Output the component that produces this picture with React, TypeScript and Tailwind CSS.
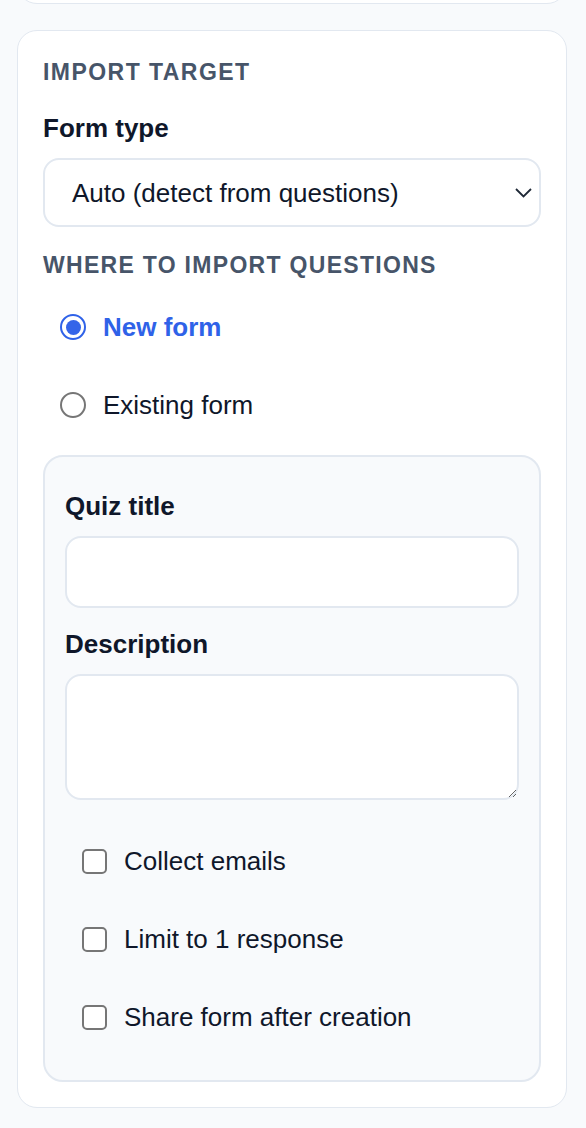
import { useState } from "react";

const font = { fontFamily: '"Liberation Sans", Arial, sans-serif' };

function Radio({ checked, label, onClick }: { checked: boolean; label: string; onClick: () => void }) {
    return (
        <div onClick={onClick} className="flex items-center h-[52px] pl-[17px] gap-[17px] cursor-pointer">
            {checked ? (
                <span className="w-[26px] h-[26px] rounded-full border-[2.5px] border-[#2f62e8] bg-white flex items-center justify-center">
                    <span className="w-[15px] h-[15px] rounded-full bg-[#3565e9]" />
                </span>
            ) : (
                <span className="w-[26px] h-[26px] rounded-full border-2 border-[#767676] bg-white" />
            )}
            <span className={checked ? "text-[26px] leading-[36px] font-bold text-[#2f62e8]" : "text-[26px] leading-[36px] text-[#0f172a]"}>
                {label}
            </span>
        </div>
    );
}

function Checkbox({ label }: { label: string }) {
    const [on, setOn] = useState(false);
    return (
        <div onClick={() => setOn(!on)} className="flex items-center h-[52px] pl-[17px] gap-[17px] cursor-pointer">
            <span className={on ? "w-[25px] h-[25px] rounded-[5px] border-2 border-[#2f62e8] bg-[#2f62e8]" : "w-[25px] h-[25px] rounded-[5px] border-2 border-[#767676] bg-white"} />
            <span className="text-[26px] leading-[36px] text-[#0f172a]">{label}</span>
        </div>
    );
}

export default function App() {
    const [target, setTarget] = useState("new");

    return (
        <div style={font} className="min-h-screen bg-[#f8fafc] pb-[20px] overflow-hidden">
            {/* bottom of the previous card */}
            <div className="ml-[17px] w-[550px] h-[44px] -mt-[40px] bg-white border border-[#e2e8f0] rounded-[20px]" />

            <div className="ml-[17px] mt-[26px] w-[550px] bg-white border border-[#e2e8f0] rounded-[20px] px-[25px] pt-[25px] pb-[25px] flex flex-col">
                <h2 className="text-[23px] leading-[32px] font-bold tracking-[1.45px] text-[#475569]">IMPORT TARGET</h2>

                <label className="mt-[22px] text-[26px] leading-[36px] font-bold text-[#0f172a]">Form type</label>
                <div className="mt-[12px] h-[69px] bg-white border-2 border-[#e2e8f0] rounded-[16px] pl-[27px] pr-[7px] flex items-center justify-between">
                    <span className="text-[26px] leading-[36px] text-[#0f172a]">Auto (detect from questions)</span>
                    <svg width="17" height="10" viewBox="0 0 17 10" fill="none">
                        <polyline points="1,1 8.5,8.5 16,1" stroke="#1f2937" strokeWidth="1.8" />
                    </svg>
                </div>

                <h2 className="mt-[22px] text-[23px] leading-[32px] font-bold tracking-[1.3px] text-[#475569]">WHERE TO IMPORT QUESTIONS</h2>

                <div className="mt-[20px] flex flex-col gap-[26px]">
                    <Radio checked={target === "new"} label="New form" onClick={() => setTarget("new")} />
                    <Radio checked={target === "existing"} label="Existing form" onClick={() => setTarget("existing")} />
                </div>

                <div className="mt-[24px] bg-[#f8fafc] border-2 border-[#e2e8f0] rounded-[20px] px-[20px] pt-[31px] pb-[37px] flex flex-col">
                    <label className="text-[26px] leading-[36px] font-bold text-[#0f172a]">Quiz title</label>
                    <input className="mt-[12px] h-[72px] bg-white border-2 border-[#e2e8f0] rounded-[16px] px-[16px] text-[26px] outline-none" />

                    <label className="mt-[18px] text-[26px] leading-[36px] font-bold text-[#0f172a]">Description</label>
                    <textarea className="mt-[12px] h-[126px] bg-white border-2 border-[#e2e8f0] rounded-[16px] px-[16px] py-[12px] text-[26px] outline-none resize-y" />

                    <div className="mt-[35px] flex flex-col gap-[26px]">
                        <Checkbox label="Collect emails" />
                        <Checkbox label="Limit to 1 response" />
                        <Checkbox label="Share form after creation" />
                    </div>
                </div>
            </div>
        </div>
    );
}
